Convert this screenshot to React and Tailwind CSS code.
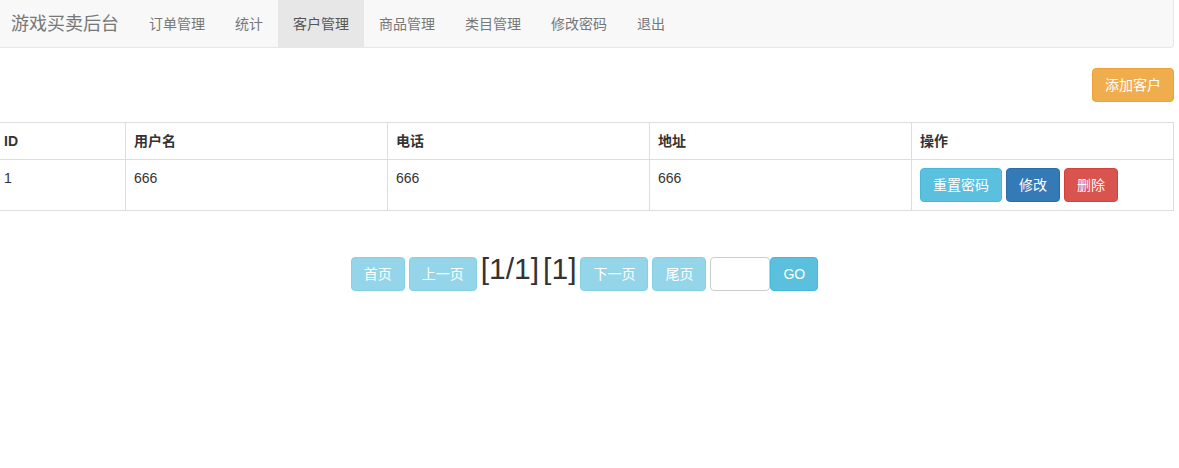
import React from "react";

const navItems = ["订单管理", "统计", "客户管理", "商品管理", "类目管理", "修改密码", "退出"];

const font = { fontFamily: '"Liberation Sans", Arial, "Noto Sans CJK SC", sans-serif' };

export default function App() {
  return (
    <div className="min-h-[468px] bg-white text-[14px] leading-[20px] text-[#333]" style={font}>
      <div className="ml-[-5px] w-[1179px]">
        {/* navbar */}
        <nav className="flex h-[48px] items-stretch rounded-b-[4px] border border-t-0 border-[#e7e7e7] bg-[#f8f8f8]">
          <a className="flex items-center pl-[15px] pr-[15px] text-[18px] text-[#777]">游戏买卖后台</a>
          <ul className="flex items-stretch">
            {navItems.map((item) => (
              <li
                key={item}
                className={`flex items-center px-[15px] ${
                  item === "客户管理" ? "bg-[#e7e7e7] text-[#555]" : "text-[#777]"
                }`}
              >
                {item}
              </li>
            ))}
          </ul>
        </nav>

        <div className="mt-[20px] flex justify-end">
          <button className="h-[34px] rounded-[4px] border border-[#eea236] bg-[#f0ad4e] px-[12px] text-white">
            添加客户
          </button>
        </div>

        {/* table */}
        <table className="mt-[20px] w-[1179px] table-fixed border-collapse border border-[#ddd]">
          <thead>
            <tr className="text-left">
              <th className="w-[130px] border border-[#ddd] px-[8px] py-[8px] font-bold">ID</th>
              <th className="w-[262px] border border-[#ddd] px-[8px] py-[8px] font-bold">用户名</th>
              <th className="w-[262px] border border-[#ddd] px-[8px] py-[8px] font-bold">电话</th>
              <th className="w-[262px] border border-[#ddd] px-[8px] py-[8px] font-bold">地址</th>
              <th className="border border-[#ddd] px-[8px] py-[8px] font-bold">操作</th>
            </tr>
          </thead>
          <tbody>
            <tr>
              <td className="border border-[#ddd] p-[8px] align-top">1</td>
              <td className="border border-[#ddd] p-[8px] align-top">666</td>
              <td className="border border-[#ddd] p-[8px] align-top">666</td>
              <td className="border border-[#ddd] p-[8px] align-top">666</td>
              <td className="border border-[#ddd] p-[8px] align-top">
                <div className="flex gap-[4px]">
                  <button className="h-[34px] rounded-[4px] border border-[#46b8da] bg-[#5bc0de] px-[12px] text-white">
                    重置密码
                  </button>
                  <button className="h-[34px] rounded-[4px] border border-[#2e6da4] bg-[#337ab7] px-[12px] text-white">
                    修改
                  </button>
                  <button className="h-[34px] rounded-[4px] border border-[#d43f3a] bg-[#d9534f] px-[12px] text-white">
                    删除
                  </button>
                </div>
              </td>
            </tr>
          </tbody>
        </table>

        {/* pagination */}
        <div className="mt-[41px] flex items-baseline justify-center gap-[4px]">
          <button className="h-[34px] rounded-[4px] border border-[#46b8da] bg-[#5bc0de] px-[12px] text-white opacity-65">
            首页
          </button>
          <button className="h-[34px] rounded-[4px] border border-[#46b8da] bg-[#5bc0de] px-[12px] text-white opacity-65">
            上一页
          </button>
          <span className="text-[30px] leading-[33px] text-[#333]">[1/1]</span>
          <span className="text-[30px] leading-[33px] text-[#333]">[1]</span>
          <button className="h-[34px] rounded-[4px] border border-[#46b8da] bg-[#5bc0de] px-[12px] text-white opacity-65">
            下一页
          </button>
          <button className="h-[34px] rounded-[4px] border border-[#46b8da] bg-[#5bc0de] px-[12px] text-white opacity-65">
            尾页
          </button>
          <span className="flex items-baseline">
            <input className="h-[34px] w-[60px] rounded-[4px] border border-[#ccc] bg-white px-[6px] outline-none" />
            <button className="h-[34px] rounded-[4px] border border-[#46b8da] bg-[#5bc0de] px-[12px] text-white">
              GO
            </button>
          </span>
        </div>
      </div>
    </div>
  );
}
